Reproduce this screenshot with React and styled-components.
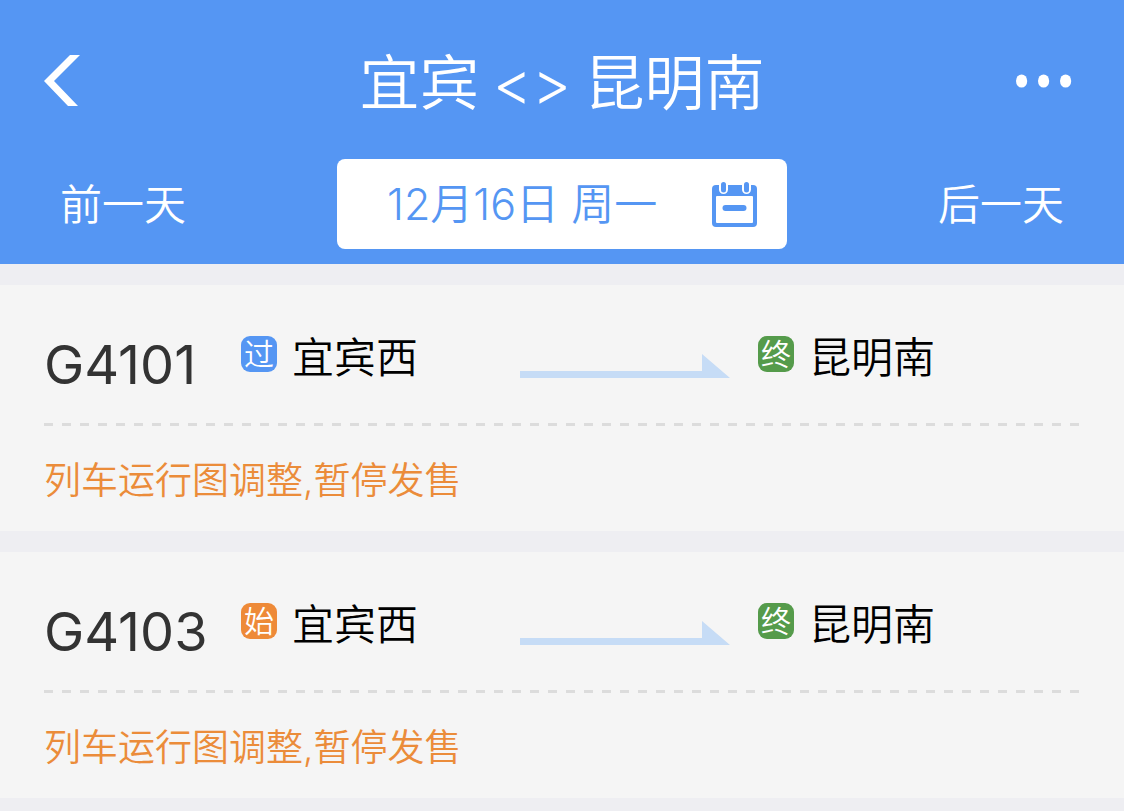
import React from "react";
import styled, { createGlobalStyle } from "styled-components";

const GlobalStyle = createGlobalStyle`
  * {
    box-sizing: border-box;
  }

  body {
    margin: 0;
    background: #eeeef2;
    font-family: Inter, "Noto Sans CJK SC", sans-serif;
    font-weight: 350;
  }

  button {
    margin: 0;
    padding: 0;
    border: 0;
    background: none;
    color: inherit;
    font: inherit;
    cursor: pointer;
  }

  svg {
    display: block;
    flex-shrink: 0;
  }
`;

const Header = styled.header`
  background: #5596f3;
  color: #fff;
  padding-bottom: 15px;
`;

const TitleBar = styled.div`
  height: 159px;
  padding: 2px 44px 0;
  display: grid;
  grid-template-columns: 64px 1fr 64px;
  align-items: center;
`;

const Title = styled.h1`
  margin: 0;
  font-family: "Noto Sans CJK SC", sans-serif;
  font-size: 60px;
  font-weight: 350;
  line-height: 80px;
  text-align: center;
  white-space: nowrap;
`;

const Between = styled.span`
  font-family: Inter, sans-serif;
`;

const IconButton = styled.button`
  height: 60px;
  display: flex;
  align-items: center;
  justify-content: ${props => (props.$end ? "flex-end" : "flex-start")};
`;

const DateBar = styled.div`
  padding: 0 60px;
  display: flex;
  align-items: center;
  justify-content: space-between;
`;

const DayButton = styled.button`
  padding-top: 2px;
  font-size: 42px;
  line-height: 60px;
`;

const DateButton = styled.button`
  width: 450px;
  height: 90px;
  padding: 0 30px 0 50px;
  display: flex;
  align-items: center;
  justify-content: space-between;
  border-radius: 8px;
  background: #fff;
  color: #5596f3;
  font-size: 43px;
  line-height: 60px;
`;

const TrainList = styled.ul`
  margin: 0;
  padding: 21px 0;
  display: grid;
  gap: 21px;
  list-style: none;
`;

const TrainCard = styled.li`
  padding: 0 44px;
  background: #f5f5f5;
`;

const TrainRow = styled.div`
  height: 138px;
  display: grid;
  grid-template-columns: 197fr 279fr 238fr 322fr;
  align-items: center;
`;

const TrainCode = styled.div`
  padding-top: 22px;
  color: #333;
  font-size: 54px;
  font-weight: 400;
  line-height: 60px;
`;

const Station = styled.div`
  padding-top: 8px;
  display: flex;
  align-items: center;
  gap: 15px;
  color: #000;
  font-size: 42px;
  line-height: 60px;
  white-space: nowrap;
`;

const Badge = styled.span`
  width: 36px;
  height: 36px;
  margin-bottom: 8px;
  border-radius: 9px;
  background: ${props => props.$color};
  color: #fff;
  font-size: 30px;
  line-height: 36px;
  text-align: center;
`;

const ArrowBox = styled.div`
  padding-top: 24px;
`;

const Divider = styled.div`
  height: 3px;
  background: repeating-linear-gradient(
    90deg,
    #dcdcdc 0,
    #dcdcdc 9px,
    transparent 9px,
    transparent 18px
  );
`;

const Notice = styled.p`
  height: 105px;
  margin: 0;
  padding-bottom: 2px;
  display: flex;
  align-items: center;
  color: #eb8c3a;
  font-size: 37px;
`;

const badges = {
  过: "#5596f3",
  始: "#ee8a38",
  终: "#559b4b"
};

const trains = [
  { code: "G4101", from: ["过", "宜宾西"], to: ["终", "昆明南"] },
  { code: "G4103", from: ["始", "宜宾西"], to: ["终", "昆明南"] }
];

function BackIcon() {
  return (
    <svg width="36" height="52" viewBox="0 0 36 52" aria-hidden="true">
      <path d="M26 0H36L10 26L34 51H24L0 26Z" fill="#fff" />
    </svg>
  );
}

function MoreIcon() {
  return (
    <svg width="64" height="14" viewBox="0 0 64 14" aria-hidden="true">
      <g fill="#fff">
        <ellipse cx="5.6" cy="7" rx="5.6" ry="6.6" />
        <ellipse cx="27.6" cy="7" rx="5.6" ry="6.6" />
        <ellipse cx="49.6" cy="7" rx="5.6" ry="6.6" />
      </g>
    </svg>
  );
}

function CalendarIcon() {
  return (
    <svg width="45" height="46" viewBox="0 0 45 46" aria-hidden="true">
      <rect y="4" width="45" height="42" rx="4" fill="#5596f3" />
      <rect x="4" y="15" width="37" height="27" rx="1" fill="#fff" />
      <rect x="10.5" y="24" width="24" height="6" rx="3" fill="#5596f3" />
      <rect x="7" y="-3" width="9" height="16" rx="4.5" fill="#fff" />
      <rect x="30" y="-3" width="9" height="16" rx="4.5" fill="#fff" />
      <rect x="9" y="1" width="5" height="10.5" rx="2.5" fill="#5596f3" />
      <rect x="32" y="1" width="5" height="10.5" rx="2.5" fill="#5596f3" />
    </svg>
  );
}

function Arrow() {
  return (
    <svg width="210" height="24" viewBox="0 0 210 24" aria-hidden="true">
      <path d="M0 17H182V0L210 24H0Z" fill="#c6dcf6" />
    </svg>
  );
}

function StationName({ station }) {
  const [badge, name] = station;
  return (
    <Station>
      <Badge $color={badges[badge]}>{badge}</Badge>
      <span>{name}</span>
    </Station>
  );
}

function Train({ train }) {
  return (
    <TrainCard>
      <TrainRow>
        <TrainCode>{train.code}</TrainCode>
        <StationName station={train.from} />
        <ArrowBox>
          <Arrow />
        </ArrowBox>
        <StationName station={train.to} />
      </TrainRow>
      <Divider />
      <Notice>列车运行图调整,暂停发售</Notice>
    </TrainCard>
  );
}

export default function App() {
  return (
    <>
      <GlobalStyle />
      <Header>
        <TitleBar>
          <IconButton aria-label="返回">
            <BackIcon />
          </IconButton>
          <Title>
            宜宾 <Between>&lt;&gt;</Between> 昆明南
          </Title>
          <IconButton $end aria-label="更多">
            <MoreIcon />
          </IconButton>
        </TitleBar>
        <DateBar>
          <DayButton>前一天</DayButton>
          <DateButton>
            <span>12月16日 周一</span>
            <CalendarIcon />
          </DateButton>
          <DayButton>后一天</DayButton>
        </DateBar>
      </Header>
      <TrainList>
        {trains.map(train => (
          <Train key={train.code} train={train} />
        ))}
      </TrainList>
    </>
  );
}
